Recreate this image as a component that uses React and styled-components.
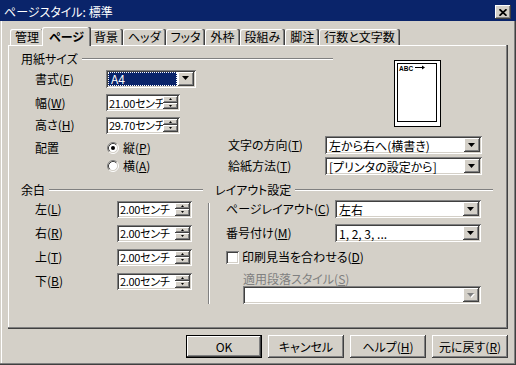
import React from "react";
import styled, { createGlobalStyle, css } from "styled-components";

const FACE = "#D4D0C8";
const NAVY = "#0A246A";

const raised = css`
  box-shadow: inset -1px -1px #404040, inset 1px 1px #ffffff, inset -2px -2px #808080, inset 2px 2px ${FACE};
`;
const sunken = css`
  box-shadow: inset 1px 1px #808080, inset -1px -1px #ffffff, inset 2px 2px #404040, inset -2px -2px ${FACE};
`;

const GlobalStyle = createGlobalStyle`
  html, body { margin: 0; padding: 0; background: ${FACE}; }
  body {
    font-family: "Noto Sans CJK JP", "Noto Sans", sans-serif;
    font-size: 12px;
    color: #000;
    font-feature-settings: "palt" 1;
  }
  * { box-sizing: border-box; }
  u { text-underline-offset: 1px; }
`;

const Window = styled.div`
  width: 516px;
  height: 365px;
  background: ${FACE};
  display: flex;
  flex-direction: column;
  overflow: hidden;
  box-shadow: inset -1px -1px #404040, inset -2px -2px #808080, inset 1px 0 ${FACE}, inset 2px 0 #ffffff;
`;

const TitleBar = styled.div`
  height: 21px;
  flex: none;
  background: ${NAVY};
  display: flex;
  align-items: center;
  justify-content: space-between;
  padding: 3px 5px 0 4px;
`;

const Title = styled.div`
  color: #fff;
  line-height: 14px;
  white-space: nowrap;
`;

const CloseButton = styled.div`
  width: 16px;
  height: 14px;
  background: ${FACE};
  display: grid;
  place-items: center;
  ${raised}
`;

const Body = styled.div`
  flex: 1;
  padding: 6px 8px 0;
  display: flex;
  flex-direction: column;
`;

const TabStrip = styled.div`
  height: 18px;
  display: flex;
  align-items: flex-end;
  padding-left: 2px;
`;

const Tab = styled.div`
  position: relative;
  z-index: ${(p) => (p.$active ? 1 : 0)};
  height: ${(p) => (p.$active ? 19 : 16)}px;
  margin: ${(p) => (p.$active ? "0 -2px -1px" : "0")};
  padding: 0 ${(p) => (p.$active ? 7 : 5)}px;
  font-weight: ${(p) => (p.$active ? 700 : 400)};
  background: ${FACE};
  display: flex;
  align-items: center;
  line-height: 14px;
  white-space: nowrap;
  border-radius: 2px 2px 0 0;
  box-shadow: inset -1px 0 #404040, inset -2px 0 #808080, inset 1px 1px #ffffff;
`;

const TabPanel = styled.div`
  width: 500px;
  height: 284px;
  padding: 7px 13px 0;
  display: flex;
  flex-direction: column;
  box-shadow: inset -1px -1px #404040, inset -2px -2px #808080, inset 1px 1px #ffffff;
`;

const PaperRow = styled.div`
  display: flex;
  align-items: flex-start;
`;

const PaperFields = styled.div`
  width: 312px;
  display: flex;
  flex-direction: column;
`;

const GroupHeader = styled.div`
  height: ${(p) => p.$h || 14}px;
  display: flex;
  align-items: center;
  line-height: 14px;
  white-space: nowrap;
  &::after {
    content: "";
    flex: 1;
    height: 0;
    margin-left: 4px;
    border-top: 1px solid #808080;
    border-bottom: 1px solid #ffffff;
  }
`;

const FieldGrid = styled.div`
  display: grid;
  grid-template-columns: ${(p) => p.$cols};
  grid-template-rows: ${(p) => p.$rows};
  row-gap: ${(p) => p.$gap || 0}px;
  align-items: center;
  padding-left: ${(p) => p.$indent || 0}px;
`;

const FieldLabel = styled.div`
  display: flex;
  align-items: center;
  line-height: 14px;
  white-space: nowrap;
  color: ${(p) => (p.$disabled ? "#808080" : "#000")};
`;

const SelectBox = styled.div`
  width: ${(p) => p.$width}px;
  height: 18px;
  padding: 2px;
  display: flex;
  align-items: stretch;
  background: #fff;
  ${sunken}
`;

const SelectValue = styled.div`
  flex: 1;
  min-width: 0;
  display: flex;
  align-items: center;
  padding-left: 2px;
  white-space: nowrap;
  ${(p) =>
    p.$focused &&
    css`
      margin: 0 1px 0 0;
      padding-left: 3px;
      background: ${NAVY};
      color: #fff;
      outline: 1px dotted #ffffff;
      outline-offset: -1px;
    `}
`;

const DropButton = styled.div`
  width: 16px;
  height: 14px;
  flex: none;
  background: ${FACE};
  display: grid;
  place-items: center;
  ${raised}
`;

const SpinBox = styled.div`
  width: ${(p) => p.$width}px;
  height: 17px;
  padding: 2px;
  display: flex;
  background: #fff;
  ${sunken}
`;

const SpinText = styled.div`
  flex: 1;
  min-width: 0;
  display: flex;
  align-items: center;
  padding-left: 1px;
  font-size: 11px;
  letter-spacing: -0.3px;
  white-space: nowrap;
`;

const SpinButtons = styled.div`
  width: 15px;
  flex: none;
  display: flex;
  flex-direction: column;
`;

const SpinButton = styled.div`
  flex: 1;
  background: ${FACE};
  display: grid;
  place-items: center;
  ${raised}
`;

const OrientRow = styled.div`
  display: flex;
  align-items: flex-start;
`;

const OrientGroup = styled.div`
  width: 207px;
  display: flex;
  padding: 3px 0 0 14px;
`;

const OrientLabel = styled(FieldLabel)`
  width: 71px;
  height: 18px;
`;

const RadioList = styled.div`
  display: flex;
  flex-direction: column;
`;

const RadioOption = styled.div`
  height: 18px;
  display: flex;
  align-items: center;
  gap: 4px;
  padding-left: 1px;
  line-height: 14px;
  white-space: nowrap;
`;

const BottomRow = styled.div`
  display: flex;
  align-items: flex-start;
  margin-top: 7px;
`;

const Group = styled.div`
  width: ${(p) => p.$width}px;
  display: flex;
  flex-direction: column;
`;

const VSeparator = styled.div`
  width: 2px;
  height: 101px;
  margin: 21px 5px 0;
  border-left: 1px solid #808080;
  border-right: 1px solid #ffffff;
`;

const FullRow = styled.div`
  grid-column: 1 / -1;
  align-self: ${(p) => p.$align || "center"};
  padding-left: ${(p) => p.$indent || 0}px;
  display: flex;
  align-items: center;
`;

const CheckOption = styled.div`
  display: flex;
  align-items: center;
  gap: 3px;
  line-height: 14px;
  white-space: nowrap;
`;

const CheckBox = styled.span`
  width: 13px;
  height: 13px;
  background: #fff;
  ${sunken}
`;

const PreviewBox = styled.div`
  margin: 8px 0 0 61px;
  width: 47px;
  height: 67px;
  line-height: 0;
`;

const ButtonRow = styled.div`
  display: flex;
  justify-content: flex-end;
  gap: 6px;
  margin-top: 6px;
`;

const PushButton = styled.div`
  width: 76px;
  height: 23px;
  background: ${FACE};
  display: flex;
  align-items: center;
  justify-content: center;
  line-height: 14px;
  white-space: nowrap;
  ${(p) =>
    p.$default
      ? css`
          box-shadow: inset 0 0 0 1px #000, inset -2px -2px #404040, inset 2px 2px #ffffff,
            inset -3px -3px #808080;
        `
      : raised}
`;

const DownArrow = ({ disabled }) => (
  <svg width="8" height="5" viewBox="0 0 8 5">
    {disabled && <path d="M1 1h7l-3.5 4z" fill="#fff" />}
    <path d="M0 0h7l-3.5 4z" fill={disabled ? "#808080" : "#000"} />
  </svg>
);

const TinyArrow = ({ up }) => (
  <svg width="3" height="2" viewBox="0 0 3 2">
    <path d={up ? "M1.5 0L3 2H0z" : "M0 0h3L1.5 2z"} fill="#000" />
  </svg>
);

const Select = ({ width, value, focused, disabled }) => (
  <SelectBox $width={width}>
    <SelectValue $focused={focused}>{value}</SelectValue>
    <DropButton>
      <DownArrow disabled={disabled} />
    </DropButton>
  </SelectBox>
);

const Spin = ({ width, value }) => (
  <SpinBox $width={width}>
    <SpinText>{value}</SpinText>
    <SpinButtons>
      <SpinButton>
        <TinyArrow up />
      </SpinButton>
      <SpinButton>
        <TinyArrow />
      </SpinButton>
    </SpinButtons>
  </SpinBox>
);

const Radio = ({ checked, children }) => (
  <RadioOption>
    <svg width="12" height="12" viewBox="0 0 12 12">
      <circle cx="6" cy="6" r="4.5" fill="#fff" />
      <path d="M9.89 2.11A5.5 5.5 0 0 0 2.11 9.89" stroke="#808080" fill="none" />
      <path d="M2.11 9.89A5.5 5.5 0 0 0 9.89 2.11" stroke="#ffffff" fill="none" />
      <path d="M9.18 2.82A4.5 4.5 0 0 0 2.82 9.18" stroke="#404040" fill="none" />
      <path d="M2.82 9.18A4.5 4.5 0 0 0 9.18 2.82" stroke={FACE} fill="none" />
      {checked && <circle cx="6" cy="6" r="2" fill="#000" />}
    </svg>
    <span>{children}</span>
  </RadioOption>
);

const PagePreview = () => (
  <PreviewBox>
    <svg width="47" height="67" viewBox="0 0 47 67">
      <rect x="0.5" y="0.5" width="46" height="66" fill="#fff" stroke="#000" />
      <rect x="3.5" y="3.5" width="39" height="58" fill="#fff" stroke="#000" />
      <text x="5" y="10.5" fontSize="6.5" fontFamily="Liberation Sans, sans-serif" fontWeight="700">
        ABC
      </text>
      <path d="M21 7.5h8" stroke="#000" strokeWidth="1" />
      <path d="M28 5.5l3 2-3 2z" fill="#000" />
    </svg>
  </PreviewBox>
);

const TABS = ["管理", "ページ", "背景", "ヘッダ", "フッタ", "外枠", "段組み", "脚注", "行数と文字数"];

const MARGINS = [
  ["左", "L"],
  ["右", "R"],
  ["上", "T"],
  ["下", "B"],
];

export default function App() {
  return (
    <>
      <GlobalStyle />
      <Window>
        <TitleBar>
          <Title>ページスタイル: 標準</Title>
          <CloseButton>
            <svg width="8" height="7" viewBox="0 0 8 7">
              <path d="M0.5 0.2L7.5 6.8M7.5 0.2L0.5 6.8" stroke="#000" strokeWidth="1.7" />
            </svg>
          </CloseButton>
        </TitleBar>
        <Body>
          <TabStrip>
            {TABS.map((t, i) => (
              <Tab key={t} $active={i === 1}>
                {t}
              </Tab>
            ))}
          </TabStrip>
          <TabPanel>
            <PaperRow>
              <PaperFields>
                <GroupHeader>用紙サイズ</GroupHeader>
                <FieldGrid $cols="71px auto" $rows="25px 23px 22px" $indent={14}>
                  <FieldLabel>
                    書式(<u>F</u>)
                  </FieldLabel>
                  <Select width={90} value="A4" focused />
                  <FieldLabel>
                    幅(<u>W</u>)
                  </FieldLabel>
                  <Spin width={74} value="21.00センチ" />
                  <FieldLabel>
                    高さ(<u>H</u>)
                  </FieldLabel>
                  <Spin width={74} value="29.70センチ" />
                </FieldGrid>
              </PaperFields>
              <PagePreview />
            </PaperRow>
            <OrientRow>
              <OrientGroup>
                <OrientLabel>配置</OrientLabel>
                <RadioList>
                  <Radio checked>
                    縦(<u>P</u>)
                  </Radio>
                  <Radio>
                    横(<u>A</u>)
                  </Radio>
                </RadioList>
              </OrientGroup>
              <FieldGrid $cols="97px 157px" $rows="18px 18px" $gap={3}>
                <FieldLabel>
                  文字の方向(<u>T</u>)
                </FieldLabel>
                <Select width={157} value="左から右へ(横書き)" />
                <FieldLabel>
                  給紙方法(<u>T</u>)
                </FieldLabel>
                <Select width={157} value="[プリンタの設定から]" />
              </FieldGrid>
            </OrientRow>
            <BottomRow>
              <Group $width={182}>
                <GroupHeader $h={15}>余白</GroupHeader>
                <FieldGrid $cols="82px 75px" $rows="repeat(4, 24px)" $indent={14}>
                  {MARGINS.map(([name, key]) => (
                    <React.Fragment key={key}>
                      <FieldLabel>
                        {name}(<u>{key}</u>)
                      </FieldLabel>
                      <Spin width={75} value="2.00センチ" />
                    </React.Fragment>
                  ))}
                </FieldGrid>
              </Group>
              <VSeparator />
              <Group $width={278}>
                <GroupHeader $h={15}>レイアウト設定</GroupHeader>
                <FieldGrid $cols="109px 146px" $rows="24px 24px 24px 17px 18px" $indent={11}>
                  <FieldLabel>
                    ページレイアウト(<u>C</u>)
                  </FieldLabel>
                  <Select width={146} value="左右" />
                  <FieldLabel>
                    番号付け(<u>M</u>)
                  </FieldLabel>
                  <Select width={146} value="1, 2, 3, ..." />
                  <FullRow>
                    <CheckOption>
                      <CheckBox />
                      <span>
                        印刷見当を合わせる(<u>D</u>)
                      </span>
                    </CheckOption>
                  </FullRow>
                  <FullRow $indent={17} $align="end">
                    <FieldLabel $disabled>
                      適用段落スタイル(<u>S</u>)
                    </FieldLabel>
                  </FullRow>
                  <FullRow $indent={17}>
                    <Select width={238} value="" disabled />
                  </FullRow>
                </FieldGrid>
              </Group>
            </BottomRow>
          </TabPanel>
          <ButtonRow>
            <PushButton $default>OK</PushButton>
            <PushButton>キャンセル</PushButton>
            <PushButton>
              ヘルプ(<u>H</u>)
            </PushButton>
            <PushButton>
              元に戻す(<u>R</u>)
            </PushButton>
          </ButtonRow>
        </Body>
      </Window>
    </>
  );
}
